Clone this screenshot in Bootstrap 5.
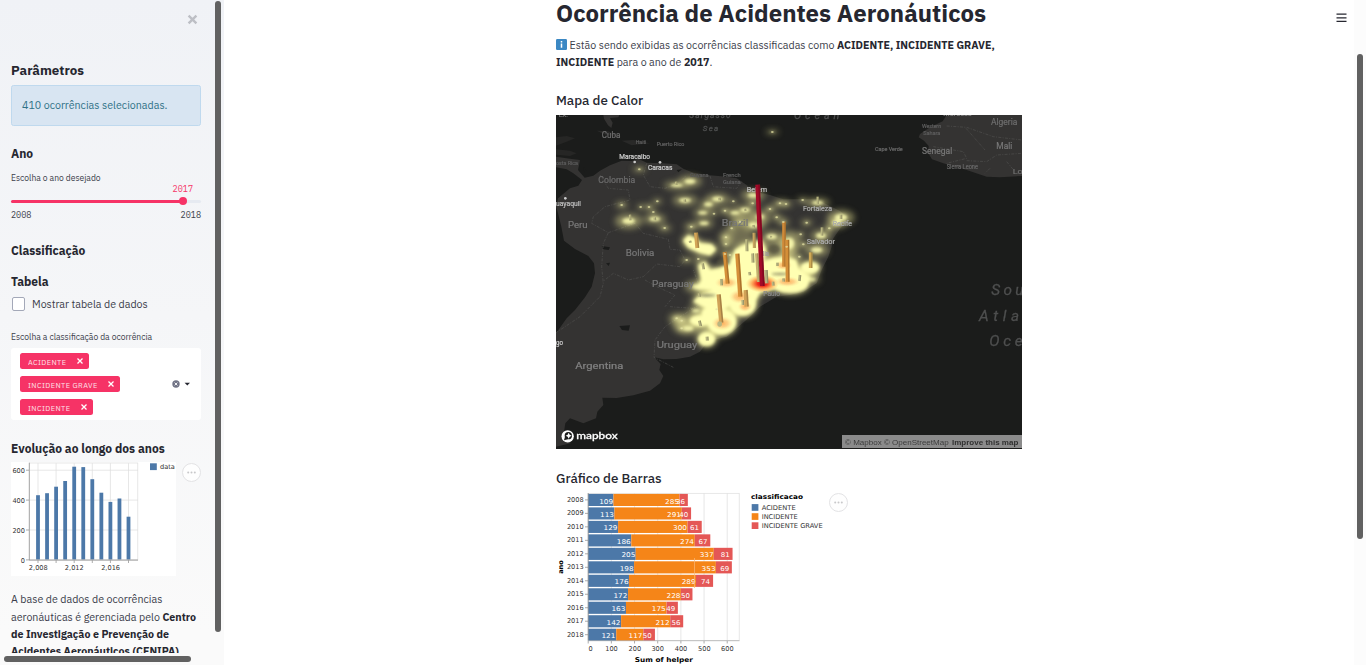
<!DOCTYPE html>
<html lang="pt-BR">
<head>
<meta charset="utf-8">
<meta name="viewport" content="width=device-width, initial-scale=1">
<title>Ocorrência de Acidentes Aeronáuticos</title>
<link href="https://cdn.jsdelivr.net/npm/bootstrap@5.3.0/dist/css/bootstrap.min.css" rel="stylesheet">
<style>
body{font-family:"IBM Plex Sans",Roboto,"Noto Sans",sans-serif;font-size:10.667px;line-height:17.07px;color:#3a3d4a;height:665px;overflow:hidden}
h1,h2,h3,b{color:#262730}
h1,h2,h3{margin:0}
.side{width:224px;background:linear-gradient(180deg,#f0f2f6,#fafafa 95%)}
.side-body{width:212px;height:653px;padding:0 11px}
.thumb{background:#616161;border-radius:3px}
.close-x{height:19px;margin-top:10px;padding-right:3px}
.h-par{font-size:13.33px;font-weight:700;line-height:18px;margin-top:32px}
.note{height:41px;margin:5.5px 0 0;padding:2px 10px 0;background:#d8e5f2;border:1px solid #bfd9ee;border-radius:2.5px;color:#2f7186}
.h-sub{font-size:12px;font-weight:700;line-height:18px}
.lbl{font-size:8.533px;line-height:14px}
.mono{font-family:"IBM Plex Mono","Liberation Mono",monospace;font-size:8.533px;line-height:12px}
.pink{color:#f63366}
.track{height:3px;background:#e6eaf1;border-radius:2px}
.fill{height:3px;width:172px;background:#f63366;border-radius:2px;position:relative}
.knob{position:absolute;right:-4px;top:-2.6px;width:8px;height:8px;border-radius:50%;background:#f63366}
.form-check-input.cbx{width:13px;height:14px;margin:0 0 0 1px;border:1px solid #a3a8b8;border-radius:2px}
.picker{height:72px;background:#fff;border-radius:3px;padding:5px 9px}
.tag{height:16px;background:#f63366;color:#fff;border-radius:2.5px;font-size:7.4px;letter-spacing:.4px;line-height:16px;padding:0 5px 0 8px}
.tag span{opacity:.85;padding-top:2px;white-space:nowrap}
.more{width:19px;height:19px;border:1px solid #e3e3e5;border-radius:50%;background:#fefefe}
.about{margin-top:15.4px;width:190px}
.col-main{width:466px}
h1{font-size:24px;font-weight:700;line-height:27px}
.h-sec{font-size:13.33px;font-weight:500;line-height:20px}
.right-bar{width:12px;background:#fcfcfc;padding:54px 3px 0}
svg{display:block;overflow:hidden}
svg.inl{display:inline-block;vertical-align:-1.5px}
.vega{font-family:"DejaVu Sans",Verdana,sans-serif}
.mp{font-family:Roboto,"Noto Sans",sans-serif}
</style>
</head>
<body class="d-flex bg-white">
<aside class="side d-flex flex-column flex-shrink-0">
 <div class="d-flex" style="height:653px">
  <div class="side-body overflow-hidden flex-shrink-0">
   <div class="close-x d-flex justify-content-end align-items-center"><svg width="11" height="11" viewBox="0 0 11 11"><path d="M1.6 1.6 9.4 9.4M9.4 1.6 1.6 9.4" stroke="#bdbfc5" stroke-width="2.4"/></svg></div>
   <h2 class="h-par">Parâmetros</h2>
   <div class="note alert d-flex align-items-center">410 ocorrências selecionadas.</div>
   <h3 class="h-sub" style="margin-top:19.5px">Ano</h3>
   <div class="lbl" style="margin-top:7.5px">Escolha o ano desejado</div>
   <div class="mono pink text-end" style="padding-right:8px;margin-top:-2px">2017</div>
   <div class="track" style="margin-top:5.5px"><div class="fill"><div class="knob"></div></div></div>
   <div class="mono d-flex justify-content-between" style="margin-top:6px"><span>2008</span><span>2018</span></div>
   <h3 class="h-sub" style="margin-top:21px">Classificação</h3>
   <h3 class="h-sub" style="margin-top:13px">Tabela</h3>
   <label class="d-flex align-items-center" style="margin-top:4.5px"><input type="checkbox" class="form-check-input cbx"><span style="margin-left:7px">Mostrar tabela de dados</span></label>
   <div class="lbl" style="margin-top:17px">Escolha a classificação da ocorrência</div>
   <div class="picker d-flex align-items-center justify-content-between" style="margin-top:4px">
    <div class="d-flex flex-column" style="gap:7px">
     <div class="tag d-flex align-items-center justify-content-between" style="width:69px"><span>ACIDENTE</span><svg width="8" height="8"><path d="M1.5 1.5 6.5 6.5M6.5 1.5 1.5 6.5" stroke="#fff" stroke-width="1.3"/></svg></div>
     <div class="tag d-flex align-items-center justify-content-between" style="width:100px"><span>INCIDENTE GRAVE</span><svg width="8" height="8"><path d="M1.5 1.5 6.5 6.5M6.5 1.5 1.5 6.5" stroke="#fff" stroke-width="1.3"/></svg></div>
     <div class="tag d-flex align-items-center justify-content-between" style="width:73px"><span>INCIDENTE</span><svg width="8" height="8"><path d="M1.5 1.5 6.5 6.5M6.5 1.5 1.5 6.5" stroke="#fff" stroke-width="1.3"/></svg></div>
    </div>
    <svg width="20" height="8" viewBox="0 0 20 8"><circle cx="4" cy="4" r="3.7" fill="#717486"/><path d="M2.6 2.6 5.4 5.4M5.4 2.6 2.6 5.4" stroke="#fff" stroke-width=".9"/><path d="M12.6 2.7h5.4L15.3 5.6z" fill="#262730"/></svg>
   </div>
   <h3 class="h-sub" style="margin-top:20px">Evolução ao longo dos anos</h3>
   <div class="d-flex" style="margin-top:4.5px">
    <svg class="vega" id="years" width="165" height="114" viewBox="11 462.3 165 114"></svg>
    <div class="more d-flex align-items-center justify-content-center" style="margin-left:6px;margin-top:1px"><svg width="9" height="3"><g fill="#c8c8ca"><circle cx="1.2" cy="1.5" r="1"/><circle cx="4.5" cy="1.5" r="1"/><circle cx="7.8" cy="1.5" r="1"/></g></svg></div>
   </div>
   <p class="about">A base de dados de ocorrências aeronáuticas é gerenciada pelo <b>Centro de Investigação e Prevenção de Acidentes Aeronáuticos (CENIPA)</b></p>
  </div>
  <div class="thumb" style="width:6px;height:631px;margin:1px 0 0 3px"></div>
 </div>
 <div class="thumb" style="width:187px;height:6px;margin:3px 0 0 4px"></div>
</aside>
<main class="flex-grow-1 position-relative">
 <div class="col-main mx-auto">
  <h1 class="text-nowrap">Ocorrência de Acidentes Aeronáuticos</h1>
  <p class="m-0" style="padding-top:9.5px"><svg class="inl" width="11" height="11" viewBox="0 0 11 11"><rect width="11" height="11" rx="1.2" fill="#3b88c3"/><path d="M5.5 2v1.5M5.5 4.5v4.2" stroke="#fff" stroke-width="1.5"/></svg> Estão sendo exibidas as ocorrências classificadas como <b>ACIDENTE, INCIDENTE GRAVE,<br>INCIDENTE</b> para o ano de <b>2017</b>.</p>
  <h3 class="h-sec" style="margin-top:19.36px">Mapa de Calor</h3>
  <svg class="mp" id="map" style="margin-top:5px" width="466" height="334" viewBox="18 15 1398 1002">
   <defs>
    <filter id="b1" x="-50%" y="-50%" width="200%" height="200%"><feGaussianBlur stdDeviation="10"/></filter>
    <filter id="b2" x="-50%" y="-50%" width="200%" height="200%"><feGaussianBlur stdDeviation="4.5"/></filter>
    <radialGradient id="hot"><stop offset="0" stop-color="#d00018"/><stop offset=".3" stop-color="#f0301c"/><stop offset=".6" stop-color="#fd9a4e" stop-opacity=".9"/><stop offset="1" stop-color="#fecc6c" stop-opacity="0"/></radialGradient>
    <radialGradient id="warm"><stop offset="0" stop-color="#fdae5c"/><stop offset=".5" stop-color="#fdc77c" stop-opacity=".8"/><stop offset="1" stop-color="#ffeda0" stop-opacity="0"/></radialGradient>
   </defs>
   <rect x="18" y="15" width="1398" height="1002" fill="#1b1c1b"/>
   <g fill="#343332">
    <path d="M160 15H208L205 22 180 24 188 38 184 54 174 46 162 26z"/>
    <path fill="#262625" d="M18 82 50 78 75 85 50 95 18 107zM18 118 60 122 80 130 60 138 18 134z"/>
    <path fill="#292928" d="M140 62 175 64 215 82 165 74zM215 92 250 90 300 100 245 106z"/>
    <path d="M18 140 60 146 90 150 84 180 104 203 130 197 150 182 180 166 215 152 245 153 265 146 290 158 340 160 380 163 400 176 430 188 480 196 530 200 560 205 590 225 612 245 660 255 700 268 800 268 838 287 870 303 890 320 885 340 870 356 850 385 845 410 835 440 815 480 800 520 760 545 720 555 680 560 630 590 600 620 560 655 530 680 490 690 465 705 450 725 420 740 380 747 340 748 313 742 332 762 328 780 340 798 330 820 300 842 250 856 200 864 157 863 160 885 142 905 138 925 100 940 60 925 46 940 42 965 62 1000 18 1010V670L50 625 75 600 105 562 125 530 135 490 132 460 115 438 75 417 42 392 34 350 24 310 18 290 24 265 60 235 85 227 96 210 70 190 50 178 18 172z"/>
    <path d="M1190 15 1178 34 1140 52 1110 72 1106 82 1122 92 1136 108 1134 128 1146 148 1180 160 1250 180 1310 200 1350 202 1416 198V15z"/>
   </g>
   <g fill="#1b1c1b"><path d="M208 648 240 646 236 662 216 660zM155 408 180 412 176 420 160 418zM168 460 180 458 176 468zM380 180 396 178 385 187zM100 170 110 182 103 188z"/></g>
   <g fill="none" stroke="#565655" stroke-width="1.6" stroke-dasharray="9 4 3 4">
    <path d="M150 195 175 235 235 240 240 270 165 290 130 320 125 340 175 368 160 400 155 470 160 520 150 560 90 620 60 640 18 668"/>
    <path d="M290 160 280 195 300 230 345 235 385 220 410 195M175 368 255 340 280 370 355 388 360 418 390 420 405 450 390 470 320 462 280 500 235 510 190 490 158 515M285 510 320 530 375 555 345 590M360 590 430 595 455 580 445 520 430 480M430 595 345 650 315 690 312 742 370 772M480 198 490 230 560 235 575 215"/>
    <path d="M1248 55 1305 120M1190 48 1250 52 1330 80 1416 90M1150 110 1240 125 1250 145 1190 160M1250 152 1310 155 1340 135 1416 130M1320 175 1305 190M1370 155 1395 185"/>
   </g>
   <g id="heat"></g>
   <g id="names"></g>
   <g id="bars3d" stroke-linecap="butt"></g>
   <g><circle cx="53" cy="979" r="18.5" fill="#fff"/><circle cx="55" cy="977" r="11" fill="#1b1c1b"/><path d="M56 968l3 6 6 3-6 3-3 6-3-6-6-3 6-3z" fill="#fff"/><path d="M42 991 45 980 53 988z" fill="#1b1c1b"/></g>
   <rect x="876" y="975" width="540" height="39" fill="#8b8b8b"/>
   <g font-family="Liberation Sans,Arial,sans-serif" font-size="24" fill="#3c3c3c"><text x="885" y="1005" textLength="311" lengthAdjust="spacingAndGlyphs">© Mapbox © OpenStreetMap</text><text x="1206" y="1005" font-weight="700" fill="#303030" textLength="199" lengthAdjust="spacingAndGlyphs">Improve this map</text></g>
   <text x="79" y="987" font-size="31" font-weight="500" fill="#fff" font-family="Lato,sans-serif" textLength="124" lengthAdjust="spacingAndGlyphs" stroke="#fff" stroke-width=".8">mapbox</text>
  </svg>
  <h3 class="h-sec" style="margin-top:19px">Gráfico de Barras</h3>
  <div class="d-flex" style="margin-top:2px">
   <svg class="vega" id="stack" width="273" height="175" viewBox="556 490 273 175"></svg>
   <div class="more d-flex align-items-center justify-content-center" style="margin-top:3.4px"><svg width="9" height="3"><g fill="#c8c8ca"><circle cx="1.2" cy="1.5" r="1"/><circle cx="4.5" cy="1.5" r="1"/><circle cx="7.8" cy="1.5" r="1"/></g></svg></div>
  </div>
 </div>
 <svg class="position-absolute" style="right:7px;top:13px" width="11" height="10"><path d="M.5 1.2H10.5M.5 4.8H10.5M.5 8.4H10.5" stroke="#262730" stroke-width="1.2"/></svg>
</main>
<div class="right-bar flex-shrink-0"><div class="thumb" style="height:485px"></div></div>
<script src="https://cdn.jsdelivr.net/npm/bootstrap@5.3.0/dist/js/bootstrap.bundle.min.js"></script>
<script>
const set=(id,h)=>document.getElementById(id).innerHTML=h;
const rect=(x,y,w,h,f)=>`<rect x="${x}" y="${y}" width="${w}" height="${h}" fill="${f}"/>`;
const line=(x1,y1,x2,y2,c,w=.7)=>`<path d="M${x1} ${y1}L${x2} ${y2}" stroke="${c}" stroke-width="${w}"/>`;
const txt=(x,y,s,a='start',f='#333',o='')=>`<text x="${x}" y="${y}" text-anchor="${a}" fill="${f}" ${o}>${s}</text>`;

// occurrences per year
let g=rect(11,462.3,165,114,'#fff')+'<g font-size="6.6">';
[[600,470.5],[400,500.4],[200,530.3],[0,560.2]].forEach(([v,y])=>{g+=line(29,y,138,y,'#ddd')+line(26,y,29,y,'#888')+txt(25,y+2.7,v,'end')});
for(let i=0;i<6;i++){const x=38+i*18.1;g+=line(x,463.5,x,560,'#ddd')+line(x,560,x,563.3,'#888')}
[495.5,493.5,487,481.3,467,467.4,479.5,493,502.2,498.8,517].forEach((y,i)=>{g+=rect(36.1+i*9.05,y,3.8,560-y,'#4c78a8')});
g+=`<rect x="29.3" y="463.3" width="108.5" height="97" fill="none" stroke="#ddd" stroke-width=".7"/>`+line(29.3,463,29.3,560.3,'#888')+line(29,560.4,138,560.4,'#888');
[['2,008',38.3],['2,012',74.3],['2,016',110.6]].forEach(([t,x])=>{g+=txt(x,570.4,t,'middle')});
g+=rect(150,463.6,6.8,6.8,'#4c78a8')+txt(160,469.2,'data')+'</g>';
set('years',g);

// occurrences per year and class: year, counts, right edge of each label
const rows=[[2008,109,285,36,613.2,679,685],[2009,113,291,40,614,681,688.3],[2010,129,300,61,617.5,687,699],[2011,186,274,67,630.8,694,707.6],[2012,205,337,81,635.4,713.7,729.7],[2013,198,353,69,633.7,715.6,729.2],[2014,176,289,74,628.6,695.7,710],[2015,172,228,50,627.4,680.5,689.9],[2016,163,175,49,625.4,665.8,675.2],[2017,142,212,56,620.5,669.6,680.4],[2018,121,117,50,615.4,642.5,651.8]];
const k=.2317,x0=588.2;let s='<g font-size="6.6">';
for(let i=0;i<7;i++){const x=x0+i*100*k;s+=line(x,493.3,x,640.5,'#ddd')+line(x,640.5,x,643.5,'#888')}
s+=`<rect x="588.2" y="493.3" width="151" height="147.2" fill="none" stroke="#ddd" stroke-width=".7"/>`;
[[0,590.5],[100,611.5],[200,634.8],[300,657.7],[400,681],[500,704.3],[600,727.4]].forEach(([v,x])=>{s+=txt(x,651.1,v,'middle')});
rows.forEach(([yr,a,b,c,ea,eb,ec],i)=>{const y=493.9+i*13.48,xa=x0+a*k,xb=xa+b*k,xc=xb+c*k;
 s+=rect(x0,y,a*k,12.1,'#4c78a8')+rect(xa,y,b*k,12.1,'#f58518')+rect(xb,y,c*k,12.1,'#e45756');
 s+=txt(583.7,y+8.1,yr,'end')+line(585,y+6,588,y+6,'#888');
 [[a,ea,14],[b,eb,14],[c,ec,9]].forEach(([v,e,w])=>{s+=txt(e-w,y+9.6,v,'start','#fff',`font-size="6.6" textLength="${w}" lengthAdjust="spacingAndGlyphs"`)})});
s+=line(588.2,493,588.2,640.5,'#888')+line(588,640.7,739.5,640.7,'#aaa')+line(694.5,558,694.5,588,'#f9b878');
s+=txt(663.8,661.6,'Sum of helper','middle','#000','font-weight="700" textLength="58" lengthAdjust="spacingAndGlyphs"');
s+='<text transform="translate(563 567) rotate(-90)" text-anchor="middle" font-weight="700">ano</text>';
s+=txt(751,498.8,'classificacao','start','#000','font-weight="700" textLength="52" lengthAdjust="spacingAndGlyphs"');
[['ACIDENTE','#4c78a8',34],['INCIDENTE','#f58518',36],['INCIDENTE GRAVE','#e45756',61]].forEach(([t,c,w],i)=>{s+=rect(751.7,504.1+i*9.1,6.7,6.7,c)+txt(761.7,509.9+i*9.1,t,'start','#333',`textLength="${w}" lengthAdjust="spacingAndGlyphs"`)});
set('stack',s+'</g>');

// heat surface: [x, y, rx, ry] spots
const spots=[[667,66,14,4],[268,178,14,5],[380,226,26,8],[420,214,24,12],[405,271,25,11],[475,283,18,10],[503,267,24,11],[215,285,13,6],[272,291,8,5],[297,291,10,6],[322,274,10,5],[310,306,7,4],[236,333,28,15],[314,327,23,10],[344,354,14,6],[550,274,10,4],[458,308,20,8],[492,311,8,4],[462,340,20,9],[424,350,14,8],[525,302,14,6],[555,308,20,8],[585,300,20,10],[610,345,22,12],[570,335,16,7],[610,256,25,11],[608,280,12,6],[690,280,15,7],[660,297,14,7],[680,322,12,6],[700,336,12,7],[665,380,22,12],[528,382,14,9],[528,402,12,9],[545,355,10,6],[540,435,10,6],[525,432,9,7],[410,450,15,5],[445,447,9,5],[758,270,12,5],[803,278,25,9],[873,322,28,15],[860,338,20,12],[770,338,12,6],[838,355,12,7],[813,377,22,12],[752,373,11,5],[760,403,11,6],[800,420,25,13],[748,440,11,6],[785,508,18,8],[718,400,22,26],[630,320,18,10],[708,282,13,6],[445,530,28,13],[380,625,16,10],[395,632,16,10],[415,655,22,11],[395,655,14,8],[438,602,18,8],[710,410,14,20],[500,598,15,10]];
let h='<g filter="url(#b1)" fill="#dedb8c">';
spots.forEach(([x,y,a,b])=>{h+=`<ellipse cx="${x}" cy="${y}" rx="${a*1.45}" ry="${b*1.5}" opacity=".52"/>`});
const big=`<path d="M400 392 415 376 435 385 450 400 485 404 498 418 480 435 450 428 415 412zM445 465 465 455 480 480 510 475 545 450 555 420 580 405 635 392 648 420 640 455 670 445 705 440 738 450 745 475 780 500 775 520 745 545 715 537 675 535 630 547 612 580 607 605 580 614 545 597 540 585 520 600 490 605 430 575 450 555 490 540 440 535 455 510z"/><ellipse cx="515" cy="635" rx="43" ry="38"/><ellipse cx="578" cy="580" rx="39" ry="36"/><ellipse cx="470" cy="687" rx="25" ry="20"/><ellipse cx="780" cy="473" rx="27" ry="17"/><ellipse cx="720" cy="521" rx="54" ry="27"/><ellipse cx="452" cy="632" rx="32" ry="16"/><ellipse cx="490" cy="610" rx="35" ry="20"/>`;
h+=`<g fill="#e8e596" stroke="#e8e596" stroke-width="8">${big}</g><g opacity=".35"><ellipse cx="560" cy="380" rx="50" ry="30"/><ellipse cx="600" cy="330" rx="60" ry="28"/><ellipse cx="690" cy="425" rx="50" ry="35"/><ellipse cx="415" cy="640" rx="50" ry="32"/><ellipse cx="490" cy="655" rx="40" ry="35"/></g></g><g filter="url(#b2)" fill="#ffffb2">`;
spots.forEach(([x,y,a,b])=>{h+=`<ellipse cx="${x}" cy="${y}" rx="${a*.68}" ry="${b*.66}" opacity="${a>17?.85:.35}"/>`});
h+=big+'</g>';
h+='<g fill="#55533f" filter="url(#b2)" opacity=".7"><ellipse cx="520" cy="457" rx="20" ry="10"/><ellipse cx="672" cy="417" rx="18" ry="13"/><ellipse cx="470" cy="556" rx="28" ry="4"/><ellipse cx="690" cy="492" rx="25" ry="3"/></g>';
[[530,518,36,18],[570,560,34,22],[517,640,34,22],[700,466,26,15],[712,515,40,16],[585,590,22,16]].forEach(([x,y,a,b])=>{h+=`<ellipse cx="${x}" cy="${y}" rx="${a}" ry="${b}" fill="url(#warm)"/>`});
h+='<ellipse cx="637" cy="521" rx="50" ry="27" fill="url(#hot)"/>';
set('heat',h);
// columns: [x1,y1,x2,y2,width,colour]
let c='';
[[240,314,241,331,7],[458,460,461,478,8],[420,392,421,398,8],[590,388,591,424,9],[608,430,609,458,9],[612,368,613,414,9,'#c9a660'],[803,260,803,282,7],[816,352,816,377,8],[750,495,748,513,8],[682,458,682,468,8],[598,486,600,496,8],[620,430,626,516,10,'#c3b06e'],[634,440,640,515,9,'#c3b06e'],[648,480,650,520,11],[514,507,515,526,8],[669,515,670,527,8],[700,505,701,515,8],[448,632,452,648,9],[447,550,449,560,8],[471,680,472,692,9],[578,570,579,585,8],[404,268,405,276,8],[508,263,509,271,8],[314,322,315,331,8],[585,296,586,303,7],[610,345,611,353,8],[873,314,873,327,8],[660,380,665,380,6],[378,215,379,225,7],[438,368,442,414,12,'#d3a557'],[782,427,782,474,11,'#d0aa55'],[587,540,590,590,13,'#d0a257'],[506,553,514,638,13,'#d0a257'],[524,426,533,521,12,'#d58f38'],[562,431,571,560,13,'#d58f38'],[702,335,702,470,11,'#cf8a38'],[712,389,713,515,12,'#d58f38'],[623,224,637,528,14,'#a30a28']].forEach(([x,y,X,Y,w,f='#b9b681'])=>{c+=line(x,y,X,Y,f,w)+line(x+w*.3,y,X+w*.3,Y,'#0003',w*.35)});
c+=`<ellipse cx="509" cy="642" rx="7" ry="8" fill="#b9b681"/>`;
spots.filter(p=>p[2]<17).forEach(([x,y])=>{c+=`<ellipse cx="${x}" cy="${y}" rx="4" ry="3" fill="#e4e2a4" opacity=".75"/>`});
set('bars3d',c);
// place names: text, x, y, size, length, colour
let n='';
[['Cuba',155,84,26,56,'#6c6c6c'],['Haiti',257,101,17,32,'#5a5a5a'],['Puerto Rico',320,108,18,83,'#5f5f5f'],['osta Rica',18,165,17,66,'#5a5a5a'],['LX.',26,22,18,28,'#777'],['Maracaibo',208,146,22,92,'#ccc'],['Caracas',294,180,22,73,'#ccc'],['Colombia',145,219,27,111,'#6b6b6b'],['Guyana',420,201,17,56,'#585858'],['French',519,201,17,53,'#5c5c5c'],['Guiana',519,222,17,53,'#5c5c5c'],['uayaquil',18,288,22,75,'#bbb'],['Peru',54,355,29,59,'#777'],['Brazil',515,348,29,80,'#777'],['Bolivia',227,439,29,86,'#777'],['Paraguay',306,530,29,125,'#777'],['Uruguay',320,714,29,122,'#777'],['Argentina',76,776,29,144,'#808080'],['go',18,705,23,21,'#ccc'],['Belém',590,246,22,61,'#bbb'],['Fortaleza',759,303,22,87,'#aaa'],['Recife',848,347,22,58,'#aaa'],['Salvador',770,403,22,85,'#aaa'],['Paulo',640,558,19,50,'#888'],['ília',635,438,19,22,'#999'],['Algeria',1323,44,26,79,'#6c6c6c'],['Mali',1339,116,27,48,'#777'],['Morocco',1180,17,22,86,'#888'],['Western',1116,54,18,57,'#5d5d5d'],['Sahara',1120,75,18,51,'#5d5d5d'],['Senegal',1116,131,27,91,'#777'],['Cape Verde',975,123,18,83,'#666'],['Sierra Leone',1190,178,19,94,'#666'],['Lo',1388,192,22,30,'#6c6c6c']].forEach(([t,x,y,z,w,f])=>{n+=`<text x="${x}" y="${y}" font-size="${z}" fill="${f}" textLength="${w}" lengthAdjust="spacingAndGlyphs" stroke="${f}" stroke-width=".7">${t}</text>`});
[['Sargasso',418,24,25,124],['Sea',458,62,24,47],['Ocean',732,26,32,136],['Sou',1324,554,46,96],['Atla',1287,632,46,120],['Oce',1318,708,46,100]].forEach(([t,x,y,z,w])=>{n+=`<text x="${x}" y="${y}" font-size="${z}" fill="#4e4f4f" stroke="#4e4f4f" stroke-width=".8" font-style="italic" textLength="${w}">${t}</text>`});
n+='<g fill="#ccc"><circle cx="254" cy="156" r="4"/><circle cx="330" cy="157" r="4"/><circle cx="46" cy="265" r="4"/></g>';
set('names',n);
</script>
</body>
</html>
